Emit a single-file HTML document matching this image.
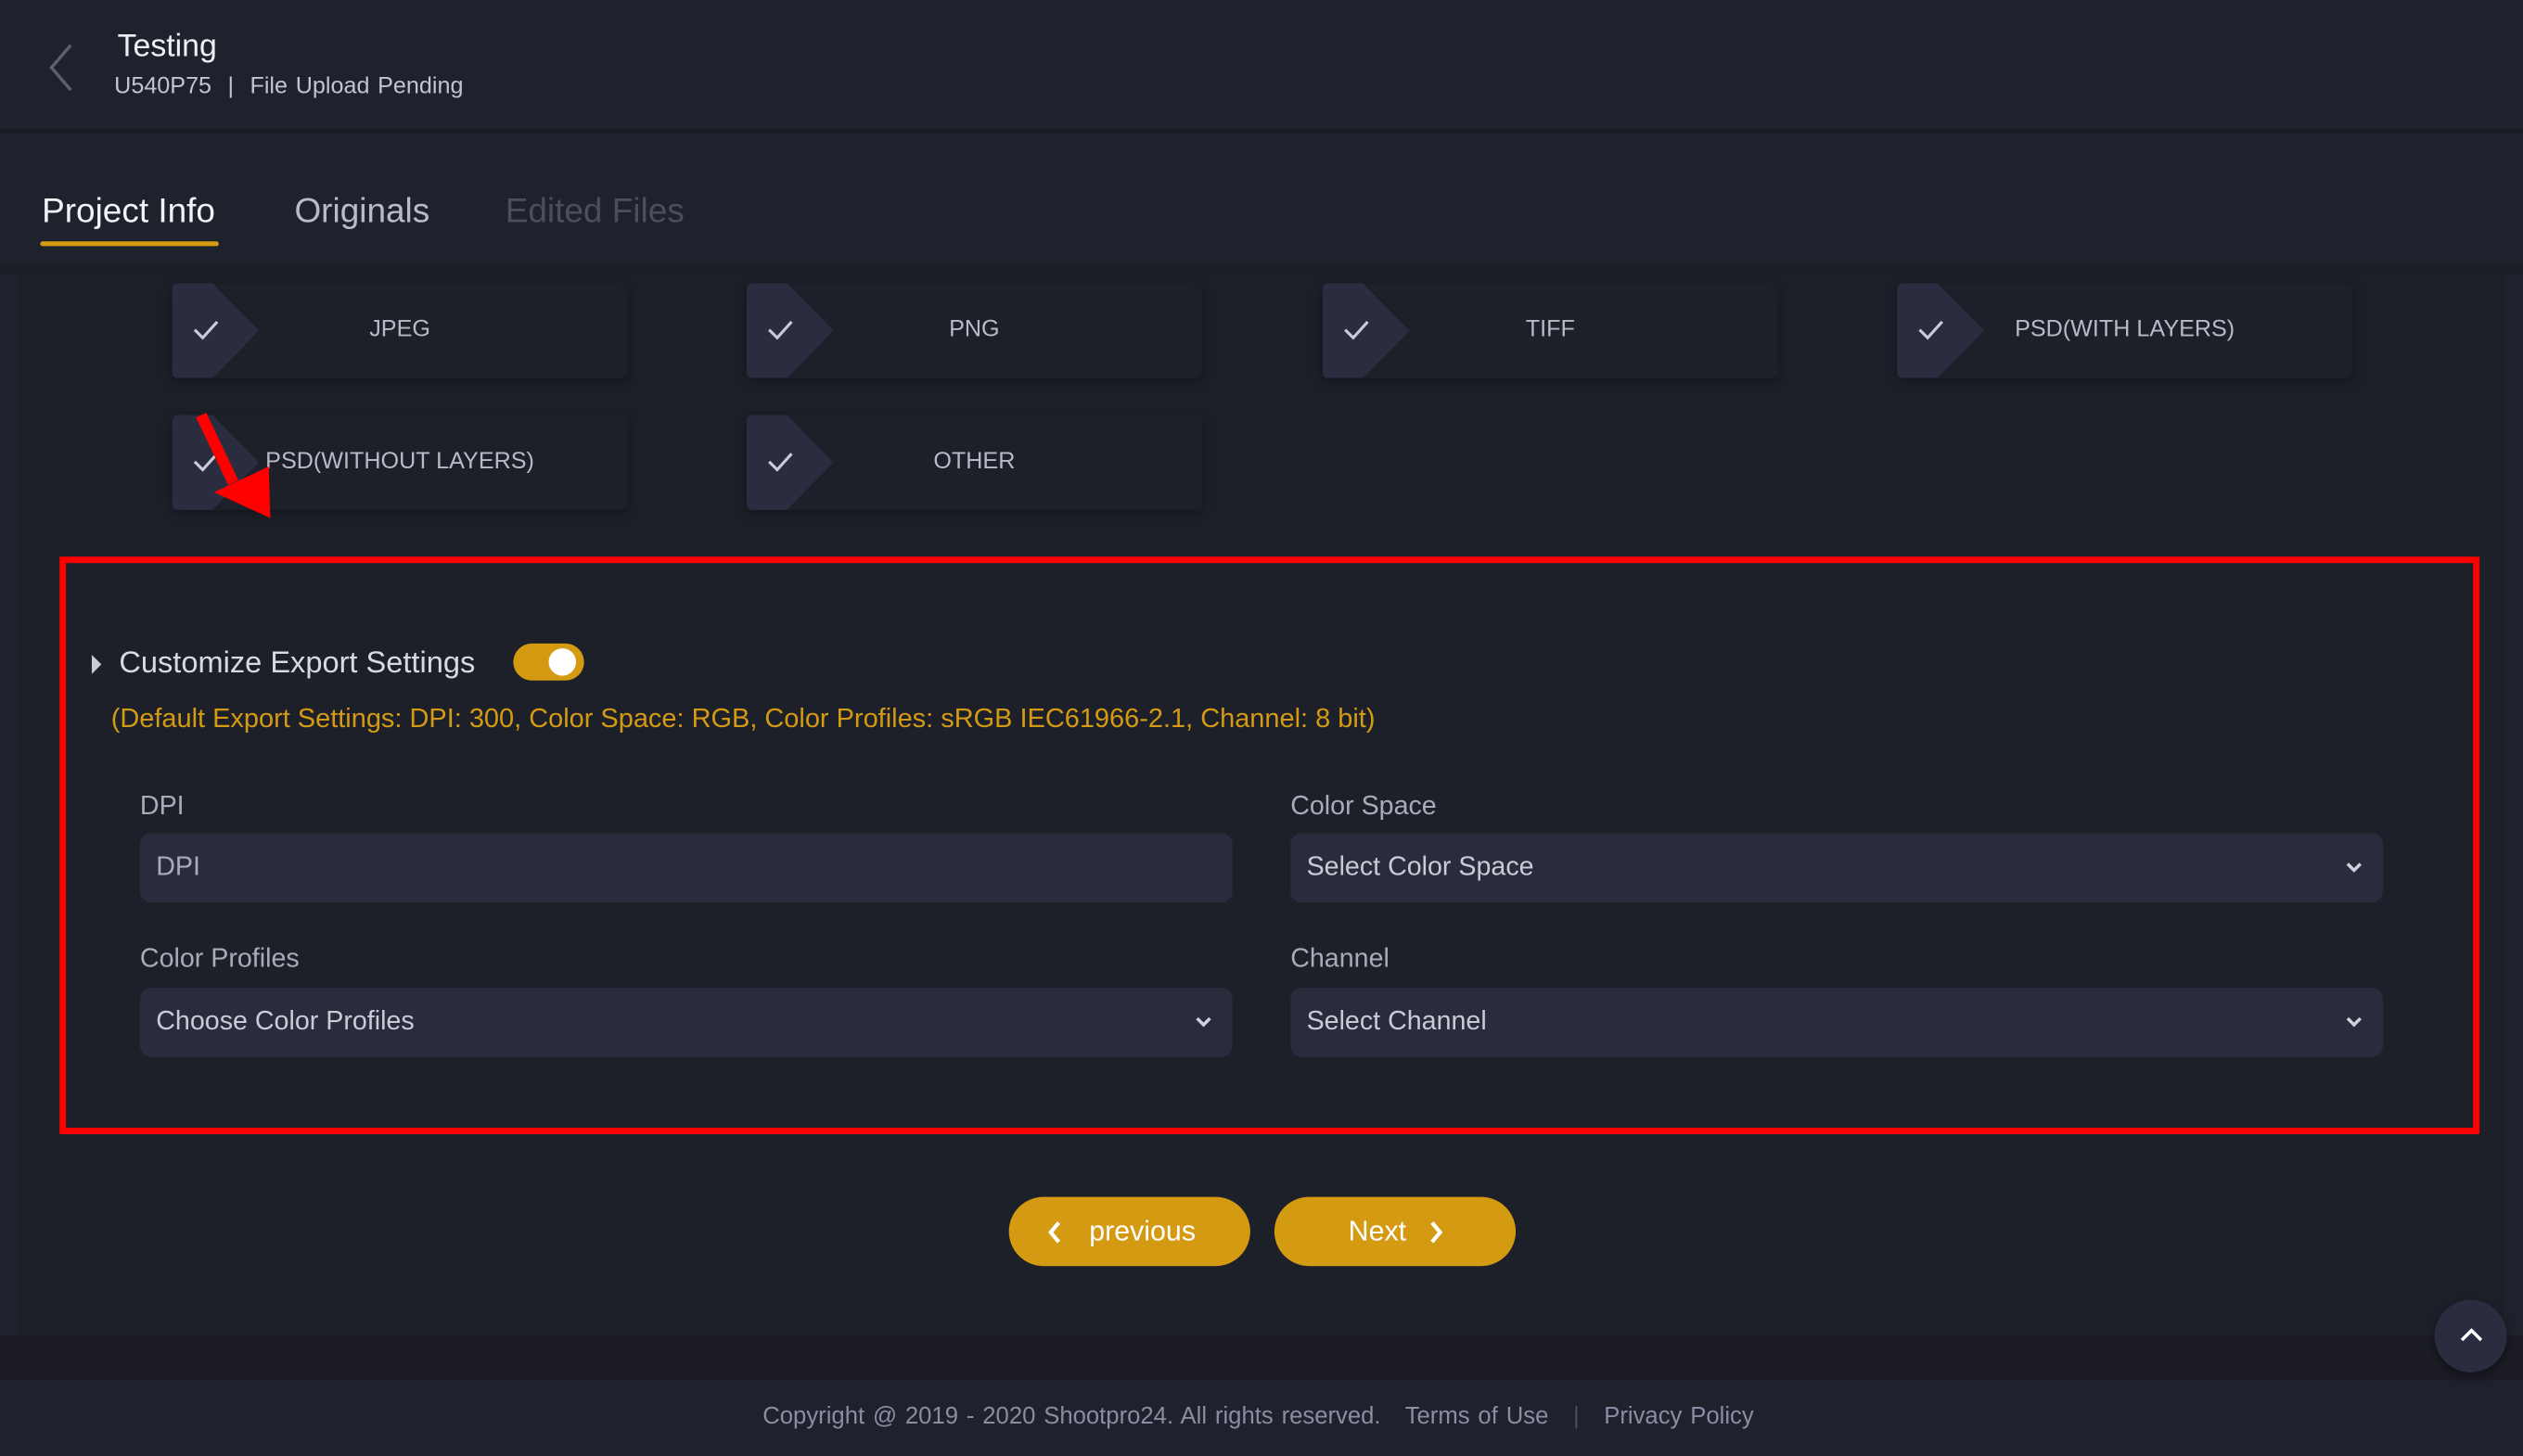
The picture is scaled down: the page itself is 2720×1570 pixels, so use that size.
<!DOCTYPE html>
<html><head><meta charset="utf-8"><style>
html,body{margin:0;padding:0;background:#1f222c;overflow:hidden}
body{width:2720px;height:1570px}
#s{width:1568px;height:905px;transform:scale(1.73469);transform-origin:0 0;position:relative;font-family:"Liberation Sans",sans-serif;color:#c9cbd6}
.a{position:absolute}
.card{position:absolute;width:283px;height:59px;background:#1d2029;border-radius:4px;box-shadow:0 2px 8px rgba(0,0,0,.35)}
.card .ck{position:absolute;left:0;top:0}
.card .t{position:absolute;left:0;right:0;top:0;line-height:59px;text-align:center;font-size:14.5px;color:#b8bac8}
.inp{position:absolute;height:43px;background:#2a2c3d;border-radius:7px;font-size:16.5px;line-height:43px;padding-left:10px;box-sizing:border-box;color:#c9cbd6}
.lab{position:absolute;font-size:16.5px;color:#a9abb9}
.btn{position:absolute;top:744px;height:43px;background:#d49a12;border-radius:22px;color:#fff;font-size:17.5px;line-height:43px;text-align:center}
</style></head><body><div id="s">
<div class="a" style="left:0;top:0;width:1568px;height:80px;background:#1f222c"></div>
<div class="a" style="left:0;top:80px;width:1568px;height:3px;background:#1a1c23"></div>
<svg class="a" style="left:28px;top:26px" width="20" height="32"><path d="M16 2 L4 16 L16 30" stroke="#5b5f6e" stroke-width="2" fill="none"/></svg>
<div class="a" style="left:73px;top:18px;font-size:19.5px;color:#eef0f5">Testing</div>
<div class="a" style="left:71px;top:46px;font-size:14.5px;color:#c2c4cf;word-spacing:1px">U540P75 &nbsp;|&nbsp; File Upload Pending</div>
<div class="a" style="left:26px;top:119px;font-size:21.3px;color:#f2f3f7">Project Info</div>
<div class="a" style="left:25px;top:150px;width:111px;height:3px;background:#d49a12;border-radius:2px"></div>
<div class="a" style="left:183px;top:119px;font-size:21.3px;color:#b9bcc8">Originals</div>
<div class="a" style="left:314px;top:119px;font-size:21.3px;color:#4b4e5c">Edited Files</div>
<div class="a" style="left:0;top:164px;width:1568px;height:6px;background:#1c1e26"></div>
<div class="a" style="left:12px;top:170px;width:1544px;height:660px;background:#1d2029"></div>
<div class="a" style="left:0;top:830px;width:1568px;height:28px;background:#1b1c24"></div>

<div class="card" style="left:107px;top:176px"><svg class="ck" width="60" height="59"><path d="M4 0H25L54 29.5L25 59H4Q0 59 0 55V4Q0 0 4 0Z" fill="#2a2d3f"/><path d="M14 29l5 5 9-10" stroke="#c9cbd6" stroke-width="1.8" fill="none"/></svg><div class="t">JPEG</div></div>
<div class="card" style="left:464px;top:176px"><svg class="ck" width="60" height="59"><path d="M4 0H25L54 29.5L25 59H4Q0 59 0 55V4Q0 0 4 0Z" fill="#2a2d3f"/><path d="M14 29l5 5 9-10" stroke="#c9cbd6" stroke-width="1.8" fill="none"/></svg><div class="t">PNG</div></div>
<div class="card" style="left:822px;top:176px"><svg class="ck" width="60" height="59"><path d="M4 0H25L54 29.5L25 59H4Q0 59 0 55V4Q0 0 4 0Z" fill="#2a2d3f"/><path d="M14 29l5 5 9-10" stroke="#c9cbd6" stroke-width="1.8" fill="none"/></svg><div class="t">TIFF</div></div>
<div class="card" style="left:1179px;top:176px"><svg class="ck" width="60" height="59"><path d="M4 0H25L54 29.5L25 59H4Q0 59 0 55V4Q0 0 4 0Z" fill="#2a2d3f"/><path d="M14 29l5 5 9-10" stroke="#c9cbd6" stroke-width="1.8" fill="none"/></svg><div class="t">PSD(WITH LAYERS)</div></div>
<div class="card" style="left:107px;top:258px"><svg class="ck" width="60" height="59"><path d="M4 0H25L54 29.5L25 59H4Q0 59 0 55V4Q0 0 4 0Z" fill="#2a2d3f"/><path d="M14 29l5 5 9-10" stroke="#c9cbd6" stroke-width="1.8" fill="none"/></svg><div class="t">PSD(WITHOUT LAYERS)</div></div>
<div class="card" style="left:464px;top:258px"><svg class="ck" width="60" height="59"><path d="M4 0H25L54 29.5L25 59H4Q0 59 0 55V4Q0 0 4 0Z" fill="#2a2d3f"/><path d="M14 29l5 5 9-10" stroke="#c9cbd6" stroke-width="1.8" fill="none"/></svg><div class="t">OTHER</div></div>
<svg class="a" style="left:115px;top:250px" width="60" height="75"><path d="M10 8L30 50" stroke="#f00" stroke-width="7"/><path d="M18 56L52 40L53 72Z" fill="#f00"/></svg>

<div class="a" style="left:37px;top:346px;width:1504px;height:359px;border:4px solid #f00;box-sizing:border-box"></div>
<svg class="a" style="left:57px;top:406px" width="8" height="14"><path d="M0 1L6 7L0 13Z" fill="#c9cbd6"/></svg>
<div class="a" style="left:74px;top:401px;font-size:18.8px;color:#d8dae3">Customize Export Settings</div>
<div class="a" style="left:319px;top:400px;width:44px;height:23px;border-radius:12px;background:#d49a12"></div>
<div class="a" style="left:341px;top:403px;width:17px;height:17px;border-radius:9px;background:#fff"></div>
<div class="a" style="left:69px;top:437px;font-size:16.7px;color:#d49a12">(Default Export Settings: DPI: 300, Color Space: RGB, Color Profiles: sRGB IEC61966-2.1, Channel: 8 bit)</div>
<div class="lab" style="left:87px;top:492px">DPI</div>
<div class="lab" style="left:802px;top:492px">Color Space</div>
<div class="inp" style="left:87px;top:518px;width:679px;color:#a9abb9">DPI</div>
<div class="inp" style="left:802px;top:518px;width:679px">Select Color Space</div>
<div class="lab" style="left:87px;top:587px">Color Profiles</div>
<div class="lab" style="left:802px;top:587px">Channel</div>
<div class="inp" style="left:87px;top:614px;width:679px">Choose Color Profiles</div>
<div class="inp" style="left:802px;top:614px;width:679px">Select Channel</div>
<svg class="a" style="left:743px;top:632px" width="10" height="8"><path d="M1 1L5 5L9 1" stroke="#d0d2dc" stroke-width="2" fill="none"/></svg>
<svg class="a" style="left:1458px;top:536px" width="10" height="8"><path d="M1 1L5 5L9 1" stroke="#d0d2dc" stroke-width="2" fill="none"/></svg>
<svg class="a" style="left:1458px;top:632px" width="10" height="8"><path d="M1 1L5 5L9 1" stroke="#d0d2dc" stroke-width="2" fill="none"/></svg>

<div class="btn" style="left:627px;width:150px;padding-left:16px;box-sizing:border-box">previous</div>
<svg class="a" style="left:651px;top:759px" width="10" height="14"><path d="M7 1L2 7L7 13" stroke="#fff" stroke-width="2.4" fill="none"/></svg>
<div class="btn" style="left:792px;width:150px;padding-right:22px;box-sizing:border-box">Next</div>
<svg class="a" style="left:887px;top:759px" width="10" height="14"><path d="M3 1L8 7L3 13" stroke="#fff" stroke-width="2.4" fill="none"/></svg>
<div class="a" style="left:1513px;top:808px;width:45px;height:45px;border-radius:23px;background:#2a2d3f;box-shadow:0 2px 6px rgba(0,0,0,.4)"></div>
<svg class="a" style="left:1529px;top:825px" width="14" height="10"><path d="M1 8L7 2L13 8" stroke="#fff" stroke-width="2" fill="none"/></svg>
<div class="a" style="left:474px;top:873px;font-size:14.8px;color:#8a8da3;word-spacing:1px">Copyright @ 2019 - 2020 Shootpro24. All rights reserved. &nbsp; Terms of Use &nbsp; <span style="color:#4b4e5c">|</span> &nbsp; Privacy Policy</div>
</div></body></html>
